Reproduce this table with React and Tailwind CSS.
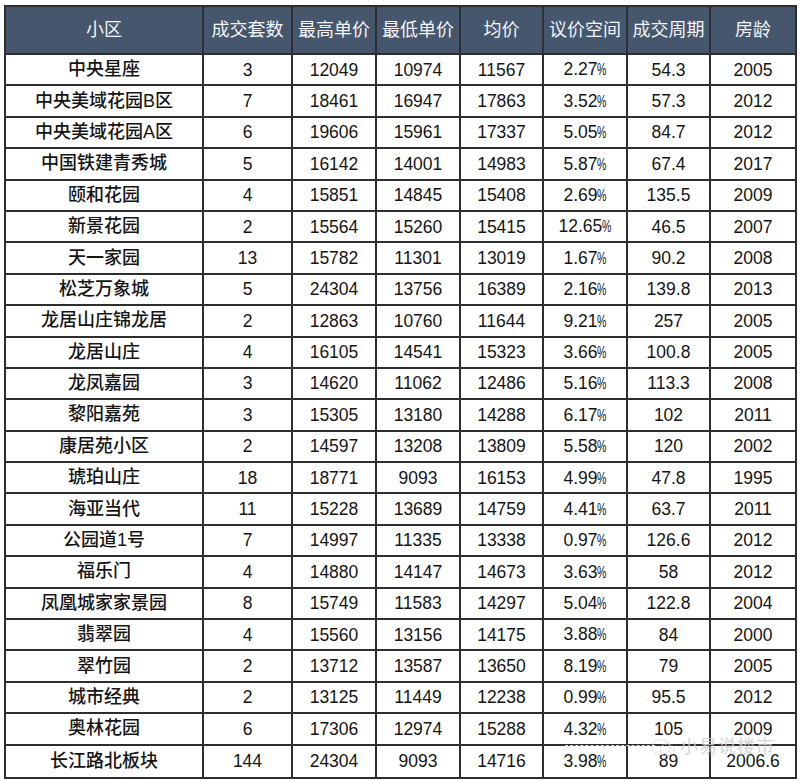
const HEAD = ['小区', '成交套数', '最高单价', '最低单价', '均价', '议价空间', '成交周期', '房龄']

const ROWS = [
  ['中央星座', 3, 12049, 10974, 11567, '2.27%', '54.3', '2005'],
  ['中央美域花园B区', 7, 18461, 16947, 17863, '3.52%', '57.3', '2012'],
  ['中央美域花园A区', 6, 19606, 15961, 17337, '5.05%', '84.7', '2012'],
  ['中国铁建青秀城', 5, 16142, 14001, 14983, '5.87%', '67.4', '2017'],
  ['颐和花园', 4, 15851, 14845, 15408, '2.69%', '135.5', '2009'],
  ['新景花园', 2, 15564, 15260, 15415, '12.65%', '46.5', '2007'],
  ['天一家园', 13, 15782, 11301, 13019, '1.67%', '90.2', '2008'],
  ['松芝万象城', 5, 24304, 13756, 16389, '2.16%', '139.8', '2013'],
  ['龙居山庄锦龙居', 2, 12863, 10760, 11644, '9.21%', '257', '2005'],
  ['龙居山庄', 4, 16105, 14541, 15323, '3.66%', '100.8', '2005'],
  ['龙凤嘉园', 3, 14620, 11062, 12486, '5.16%', '113.3', '2008'],
  ['黎阳嘉苑', 3, 15305, 13180, 14288, '6.17%', '102', '2011'],
  ['康居苑小区', 2, 14597, 13208, 13809, '5.58%', '120', '2002'],
  ['琥珀山庄', 18, 18771, 9093, 16153, '4.99%', '47.8', '1995'],
  ['海亚当代', 11, 15228, 13689, 14759, '4.41%', '63.7', '2011'],
  ['公园道1号', 7, 14997, 11335, 13338, '0.97%', '126.6', '2012'],
  ['福乐门', 4, 14880, 14147, 14673, '3.63%', '58', '2012'],
  ['凤凰城家家景园', 8, 15749, 11583, 14297, '5.04%', '122.8', '2004'],
  ['翡翠园', 4, 15560, 13156, 14175, '3.88%', '84', '2000'],
  ['翠竹园', 2, 13712, 13587, 13650, '8.19%', '79', '2005'],
  ['城市经典', 2, 13125, 11449, 12238, '0.99%', '95.5', '2012'],
  ['奥林花园', 6, 17306, 12974, 15288, '4.32%', '105', '2009'],
  ['长江路北板块', 144, 24304, 9093, 14716, '3.98%', '89', '2006.6'],
]

function Pct({ value }) {
  // the % sign in the source is narrow and squashed
  const num = value.slice(0, -1)
  return (
    <span>
      {num}
      <span className="inline-block text-[17px] scale-x-[0.62] origin-left -mr-[6px]">%</span>
    </span>
  )
}

export default function App() {
  return (
    <div className="w-[800px] h-[781px] bg-white relative overflow-hidden" style={{ fontFamily: '"Liberation Sans", "Noto Sans CJK SC", sans-serif' }}>
      <div className="ml-[4px] mt-[5px] w-[793px] border-2 border-[#2e2e2e] grid grid-cols-[198px_89px_84px_84px_83px_84px_83px_84px] grid-rows-[48px_repeat(23,31.4px)]">
        {HEAD.map((h, i) => (
          <div
            key={h}
            className={`bg-[#46566c] text-[#f2f4f7] text-[18px] flex items-center justify-center border-b-2 border-[#2b2f36] ${i < 7 ? 'border-r-2' : ''}`}
          >
            {h}
          </div>
        ))}
        {ROWS.map((row, r) =>
          row.map((cell, c) => (
            <div
              key={r + '-' + c}
              className={`flex items-center justify-center text-[#151515] border-[#2e2e2e] ${c < 7 ? 'border-r-2' : ''} ${r < ROWS.length - 1 ? 'border-b-2' : ''} ${c === 0 ? 'text-[18px] font-medium' : 'text-[17.5px]'}`}
            >
              {c === 5 ? <Pct value={cell} /> : cell}
            </div>
          ))
        )}
      </div>

      {/* faint watermark */}
      <div className="absolute left-[565px] top-[745px] w-[90px] border-t border-dashed border-[#dcdcdc]" />
      <div className="absolute left-[650px] top-[734px] flex items-center gap-1 text-[#cdcdcd] opacity-80">
        <svg width="26" height="22" viewBox="0 0 26 22" fill="none" stroke="#d4d4d4" strokeWidth="1.2" strokeDasharray="2 1.5">
          <ellipse cx="11" cy="10" rx="9" ry="7.5" />
          <ellipse cx="17" cy="13" rx="7" ry="6" />
        </svg>
        <span className="text-[18px] tracking-[1px]">小易说楼市</span>
      </div>
    </div>
  )
}
